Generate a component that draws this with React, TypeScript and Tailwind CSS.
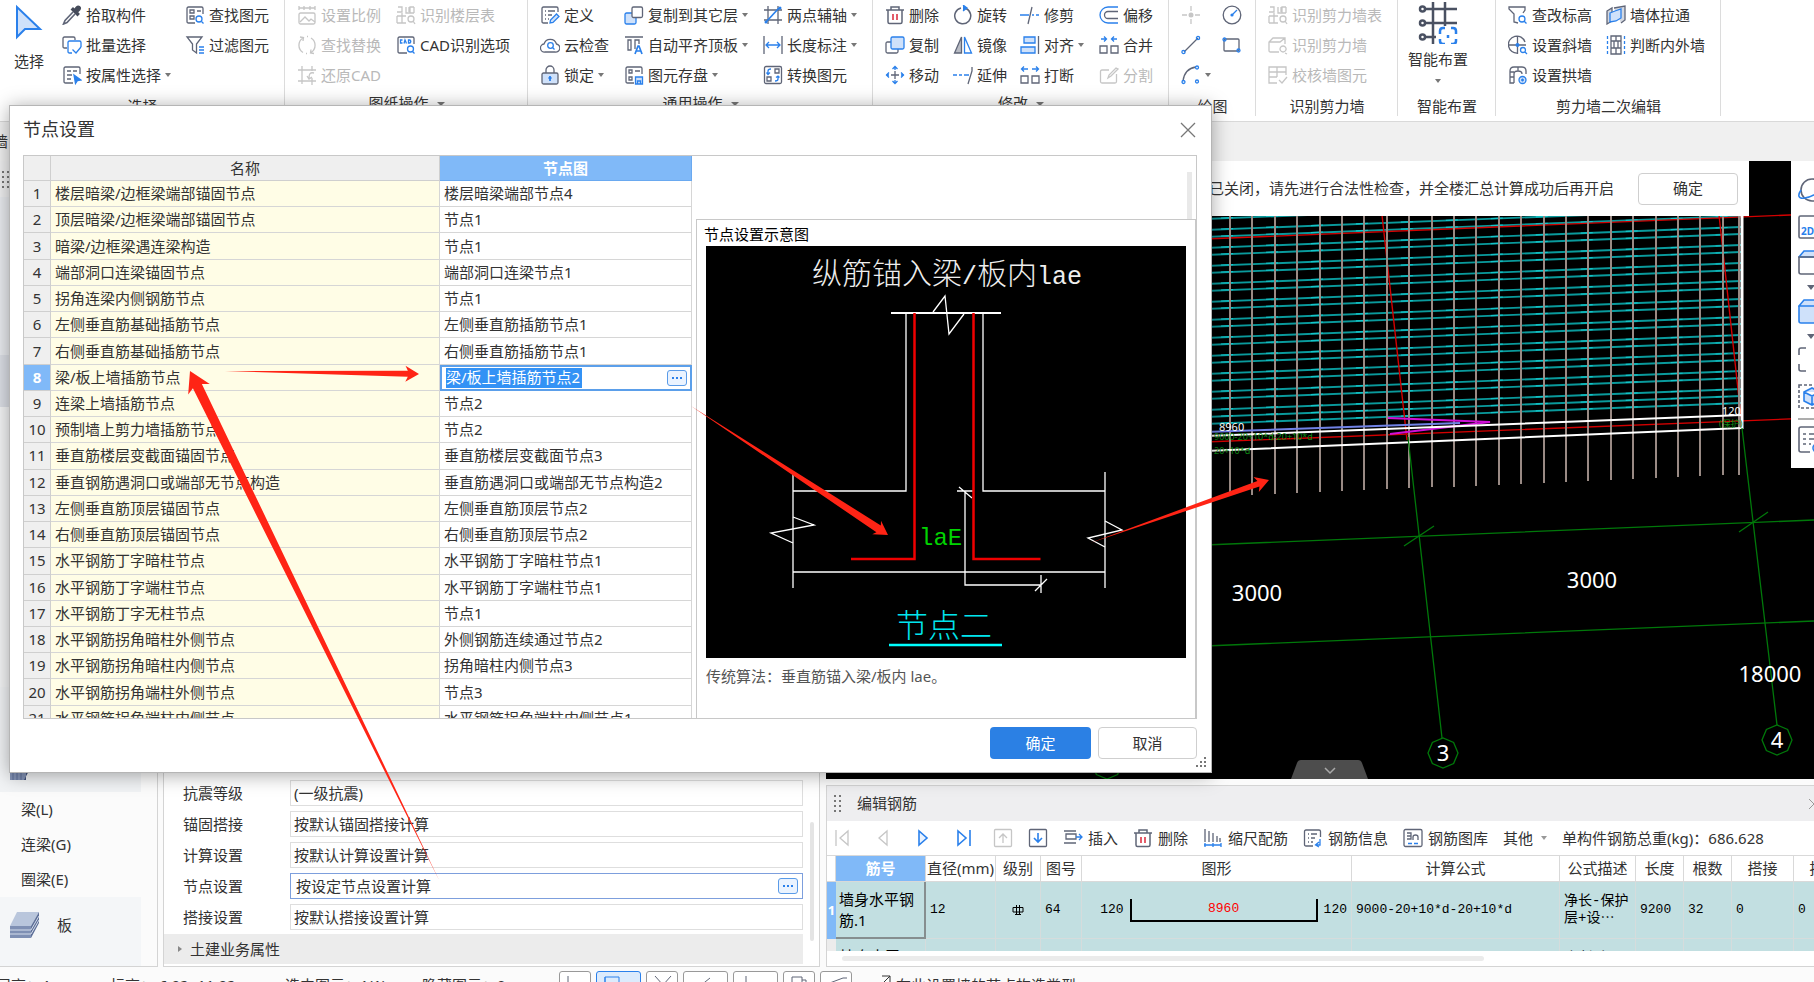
import type { ReactNode } from "react";

import { clsx } from "clsx";

const G = "#5f6577";
const B = "#2a80eb";
const L = "#cfe1fa";
const D = "#c6c6c6";

const ICONS: Record<string, ReactNode> = {
  pipette: (
    <>
      <path d="m11 7-8 8.500-1.500 3.500L5 17.500 13 9" fill="none" stroke={G} strokeWidth="1.600" />
      <path d="m9.500 4.500 6 6L17 9l-1.500-2L18 4.500Q19 2.500 17.500 1.500 16 .5 14.500 2L12.500 4.500 11 3z" fill="#454b5a" stroke="#454b5a" />
    </>
  ),
  batch: (
    <>
      <path d="M5 13H2.500Q1 13 1 11.500v-8Q1 2 2.500 2h9Q13 2 13 3.500V5" stroke={G} />
      <path d="M10 18H7.500Q6 18 6 16.500v-9Q6 6 7.500 6h10Q19 6 19 7.500V12" fill="#fff" stroke={B} />
      <path d="m10.500 14.500 3.500 3.500 5-6" stroke={B} />
    </>
  ),
  propSelect: (
    <>
      <path d="M11 18H3.500Q2 18 2 16.500v-13Q2 2 3.500 2h13Q18 2 18 3.500V9" stroke={G} />
      <path d="M5 6h4m2 0h4M5 10h5M5 14h4" stroke={G} />
      <path d="m12 10 7 5-3.500.5-2 3z" fill={B} stroke={B} />
    </>
  ),
  find: (
    <>
      <path d="M10 18H3.500Q2 18 2 16.500v-13Q2 2 3.500 2h13Q18 2 18 3.500V9" stroke={G} />
      <path d="M5 5h4v3H5zM12 6h4M5 11h4v3H5z" stroke={G} />
      <circle cx="14" cy="14" r="3" stroke={B} />
      <path d="m16.500 16.500 2 2" stroke={B} />
    </>
  ),
  filter: (
    <>
      <path d="M2 2h15l-5.500 7v9l-4-3V9z" stroke={G} />
      <path d="M14 12h5m-5 3h5m-5 3h5" stroke={B} />
    </>
  ),
  scale: (
    <>
      <path d="M2 3h16M2 1v4M18 1v4M7 1v4M13 1v4" stroke={D} />
      <rect x="2" y="8" width="16" height="11" rx="1.500" stroke={D} />
      <path d="m3 17 5-5 4 4 2-2 4 3" stroke={D} />
    </>
  ),
  replace: (
    <path d="M6 17.500A8.500 8.500 0 0 1 6 3M3 2l3.500.5L6 6M14 3a8.500 8.500 0 0 1 0 14.500M17 18.500l-3.500-.5.5-3.500M9 18.500h1M10 1.500h1" stroke={D} />
  ),
  restore: (
    <path d="M1 5h18M5 1v18M15 1v5M1 16h18M15 13v7M17 8c-4-1-5 1-5 5m-2-2 2 3 3-2" stroke={D} />
  ),
  floorTable: (
    <>
      <path d="M2 2h4v5H1M10 2v6h8M13 2v5M1 11h9M6 8v10M1 18h9M1 11v7M18 2h-4v6M18 2v6" stroke={D} />
      <circle cx="15" cy="14" r="3" stroke={D} />
      <path d="m17 16 2 3" stroke={D} />
    </>
  ),
  cad: (
    <>
      <path d="M11 18H3.500Q2 18 2 16.500v-13Q2 2 3.500 2h13Q18 2 18 3.500V9" stroke={G} />
      <path d="M6.500 5H4.500v3h2M8 8.500l1-3.500 1.500 3.500M12.500 5v3H14q1.500-1.500 0-3z" stroke={B} />
      <circle cx="14.500" cy="14" r="3" stroke={B} />
      <path d="m16.500 16.500 2 2" stroke={B} />
    </>
  ),
  define: (
    <>
      <path d="M8 18H3.500Q2 18 2 16.500v-13Q2 2 3.500 2h13Q18 2 18 3.500V7M5 6h1m2 0h7M5 10h1m2 0h4M5 14h1m2 0h1" stroke={G} />
      <path d="m10 18 .5-3 6-6 2.500 2.500-6 6z" fill={L} stroke={B} />
    </>
  ),
  cloud: (
    <>
      <path d="M5 17a4 4 0 0 1-1-8 6.500 6.500 0 0 1 12.500 0A4 4 0 0 1 15 17z" stroke={G} />
      <circle cx="10.500" cy="10.500" r="2.800" stroke={B} />
      <path d="m12.500 12.500 2 2" stroke={B} />
    </>
  ),
  lock: (
    <>
      <path d="M6 8V5a4 4 0 0 1 8 0v3" stroke={G} />
      <rect x="2" y="8" width="16" height="11" rx="1.500" fill={L} stroke={G} />
      <path d="M10 11v5m-1.500-3h3" stroke={B} strokeWidth="1.800" />
    </>
  ),
  copyFloor: (
    <>
      <rect x="1" y="8" width="11" height="11" rx="1.500" fill={L} stroke={B} />
      <rect x="8" y="2" width="10.500" height="10.500" rx="1.500" fill="#fff" stroke={G} />
    </>
  ),
  alignTop: (
    <>
      <path d="M1 2h18M4 5h3v10H4zM11 14V5h4v4" stroke={G} />
      <path d="m11 19 3-8h1l3 8m-6-3h5" stroke={B} strokeWidth="1.700" />
    </>
  ),
  save: (
    <>
      <path d="M10 18H3.500Q2 18 2 16.500v-13Q2 2 3.500 2h13Q18 2 18 3.500V9M5 5h3v3H5zm6 1h5M5 12h3v3H5z" stroke={G} />
      <path d="M11.500 12h7v7h-7zm2 7v-3h3v3" fill={L} stroke={B} />
    </>
  ),
  axis: (
    <>
      <path d="M5 1v18M15 1v18M1 5h18M1 15h18" stroke={G} />
      <path d="M3 17 16 3" stroke={B} strokeWidth="1.700" />
      <circle cx="17" cy="3" r="1.500" fill={B} />
      <circle cx="3" cy="17" r="1.500" fill={B} />
    </>
  ),
  length: (
    <>
      <path d="M1 1v18M19 1v18" stroke={G} />
      <path d="M3 10h14M6 7l-3 3 3 3m8-6 3 3-3 3" stroke={B} />
    </>
  ),
  convert: (
    <>
      <rect x="1.500" y="1.500" width="17" height="17" rx="1.500" stroke={G} />
      <path d="M12 4h4v4h-4zM4 12h4v4H4z" stroke={G} />
      <path d="M5 9V6q0-2 3-2M3.500 7.500 5 9.500l2-2M15 11v3q0 2-3 2m4.500-3.500L15 11l-2 1.500" stroke={B} />
    </>
  ),
  trash: (
    <>
      <path d="M1 5h18M6 5V2h8v3M3 5v12q0 1.500 1.500 1.500h11Q17 18.500 17 17V5" stroke={G} strokeWidth="1.500" />
      <path d="M8 9v6m4-6v6" stroke="#dc3545" strokeWidth="1.600" />
    </>
  ),
  copy: (
    <>
      <path d="M6 7H2.500Q1 7 1 8.500v8Q1 18 2.500 18h9q1.500 0 1.500-1.500V13" stroke={G} />
      <rect x="6" y="2" width="13" height="12" rx="1.500" fill={L} stroke={B} />
    </>
  ),
  move: (
    <>
      <path d="M10 6v8M6 10h8" stroke={G} />
      <path d="M7.500 4 10 1.500 12.500 4m-5 12 2.500 2.500 2.500-2.500M4 7.500 1.500 10 4 12.500m12-5 2.500 2.500-2.500 2.500M10 1v4m0 10v4M1 10h3m12 0h3" stroke={B} />
    </>
  ),
  rotate: (
    <>
      <path d="M13 3.500a8 8 0 1 1-5-.5" stroke={G} strokeWidth="1.500" />
      <path d="m10 0 4 3-4 3" fill={B} stroke={B} />
    </>
  ),
  mirror: (
    <>
      <path d="M8.500 2v16H1.500z" fill="#b9bcc4" stroke={G} />
      <path d="M11.500 2v16h7z" fill="#fff" stroke={B} />
    </>
  ),
  extend: (
    <>
      <path d="M19 2v4l-4 13" stroke={G} />
      <path d="M0 10h4m2 0h3m2 0h5" stroke={B} />
    </>
  ),
  trim: (
    <>
      <path d="m12 2-4 17" stroke={G} />
      <path d="M0 10h9m3 0h2m2 0h3" stroke={B} />
    </>
  ),
  align: (
    <>
      <path d="M18.500 1v18" stroke={G} />
      <path d="M4 2h11v6H4zM1 12h14v6H1z" fill={L} stroke={B} />
    </>
  ),
  split: (
    <>
      <path d="M1 11h7v7H1zm11 0h7v7h-7z" stroke={G} />
      <path d="M8 4H2m2-2.500L1.500 4 4 6.500M12 4h6m-2-2.500L18.500 4 16 6.500" stroke={B} />
    </>
  ),
  offset: (
    <>
      <path d="M19 6.500H9a3.500 3.500 0 0 0 0 7h10" stroke={G} />
      <path d="M19 2H9a8 8 0 0 0 0 16h10" stroke={B} />
    </>
  ),
  merge: (
    <>
      <path d="M1 11h7v7H1zm11 0h7v7h-7z" stroke={G} />
      <path d="M2 4h5M5 1.500 7.500 4 5 6.500M18 4h-5m2-2.500L12.500 4 15 6.500" stroke={B} />
    </>
  ),
  cut: <path d="M10 5H3Q1.500 5 1.500 6.500v10Q1.500 18 3 18h13q1.500 0 1.500-1.500V9M9 13l1-3 7-7 2 1-7 7z" stroke={D} />,
  point: (
    <>
      <path d="M10 1v5m0 8v5M1 10h5m8 0h5" stroke={D} />
      <circle cx="10" cy="10" r="2.500" fill={D} />
    </>
  ),
  circle: (
    <>
      <circle cx="10" cy="10" r="8.800" stroke={G} />
      <path d="m10 10 5-5" stroke={B} />
      <circle cx="10" cy="10" r="1.600" fill={B} />
    </>
  ),
  line: (
    <>
      <path d="M3 17 17 3" stroke={G} />
      <circle cx="2.500" cy="17" r="1.600" stroke={B} />
      <circle cx="17" cy="3" r="1.600" stroke={B} />
    </>
  ),
  rect: (
    <>
      <rect x="2" y="4" width="15" height="12" rx="1" stroke={G} />
      <circle cx="2.500" cy="4.500" r="1.500" stroke={B} />
      <circle cx="16.500" cy="15.500" r="1.500" stroke={B} />
    </>
  ),
  arc: (
    <>
      <path d="M2 16C3 8 8 3 15 2" stroke={G} />
      <circle cx="2.500" cy="17" r="1.500" stroke={B} />
      <circle cx="16" cy="2.500" r="1.500" stroke={B} />
      <circle cx="16" cy="16.500" r="1.500" stroke={B} />
    </>
  ),
  wallFind: (
    <path d="M11 17H2.500Q1 17 1 15.500V7l4-4h12v6M1 7h11l5-4M17 18l2 1M15 11a3 3 0 1 0 .1 0z" stroke={D} />
  ),
  wallCheck: <path d="M9 18H1V2h17v8M1 7h17M1 12h8M9 2v10m2 3 3 3 5-6" stroke={D} />,
  elevation: (
    <>
      <path d="M10 18 6 17V9L1 4V2h16v3l-2 3" stroke={G} />
      <circle cx="14" cy="14" r="3" stroke={B} />
      <path d="m16 16 2.500 2.500" stroke={B} />
    </>
  ),
  slanted: (
    <>
      <path d="M17 7A8.500 8.500 0 1 0 10 18M1 10h17M9.500 1v18" stroke={G} />
      <circle cx="9.500" cy="10" r="2" fill={B} />
      <circle cx="15" cy="15" r="2.500" stroke={B} />
      <path d="m17 17 2 2" stroke={B} />
    </>
  ),
  arch: (
    <>
      <path d="M6 18H2V6q0-4 4-4h8q4 0 4 4v3M6 18V9q0-3 4-3t4 3M2 12h4M2 7h4M10 2v4" stroke={G} />
      <circle cx="14.500" cy="15" r="3.500" fill={L} stroke={B} />
      <path d="M13 15h3m-1.500-1.500v3" stroke={B} />
    </>
  ),
  wallLink: (
    <>
      <path d="m1 6 5-3v13l-5 3zM8 3l11-2v14l-4 3" fill="#d4d8e0" stroke={G} />
      <path d="m4 8 5-2 6-2v9l-5 3-6 1z" fill={L} stroke={B} />
    </>
  ),
  wallJudge: (
    <>
      <path d="M5 1h10v18H5zM5 6h10M5 13h10M10 1v5m-2 0v7m4-7v7m-2 0v6" stroke={G} />
      <path d="M1.500 1v18M18.500 1v18" stroke={B} strokeDasharray="3 2" />
    </>
  ),
  first: <path d="M3 2v16M15 3v14L7 10z" stroke={D} />,
  prev: <path d="M14 3v14l-8-7z" stroke={D} />,
  next: <path d="M6 3v14l8-7z" fill="#eaf3ff" stroke={B} strokeWidth="1.600" />,
  last: <path d="M17 2v16M5 3v14l8-7z" stroke={B} strokeWidth="1.600" />,
  up: <path d="M2.500 1.500h15q1 0 1 1v15q0 1-1 1h-15q-1 0-1-1v-15q0-1 1-1zM10 15V6m-4 4 4-4 4 4" stroke={D} />,
  down: (
    <>
      <rect x="1.500" y="1.500" width="17" height="17" rx="1" stroke={G} />
      <path d="M10 5v9m-4-4 4 4 4-4" stroke={B} strokeWidth="1.600" />
    </>
  ),
  insert: (
    <>
      <path d="M1 3h12M1 15h12M13 6H3v5h10z" stroke={G} />
      <path d="M13 9h6m-3-3 3 3-3 3" stroke={B} />
    </>
  ),
  ruler: (
    <>
      <path d="M2 1v13m4-11v11m4-9v9m4-6v6m3-4v4" stroke={G} />
      <path d="M1 17h17M2 15v4m8-4v4m8-4v4" stroke={B} />
    </>
  ),
  info: (
    <>
      <path d="M10 18H3Q1.500 18 1.500 16.500v-13Q1.500 2 3 2h13q1.500 0 1.500 1.500V9M5 6h1m2 0h6M5 10h1m2 0h4M5 14h1m2 0h2" stroke={G} />
      <path d="M17 11v6h-4m3-3-3.500 3 3.500 2" stroke={B} />
    </>
  ),
  library: (
    <>
      <rect x="1" y="1.500" width="18" height="17" rx="1.500" stroke={G} />
      <path d="M4 5h4v6H4m0-3h4m2 4V9q0-2 2.500-2T15 9v3" stroke={G} />
      <path d="M5 15.500h4m2 0h4" stroke={B} />
    </>
  ),
};

function Icon({ name }: { name: string }) {
  return (
    <svg viewBox="0 0 20 20" className="size-5 shrink-0" fill="none" strokeWidth="1.300" aria-hidden="true">
      {ICONS[name]}
    </svg>
  );
}

function Caret() {
  return <span className="ml-1 border-x-[3px] border-t-4 border-x-transparent border-t-[#777]" aria-hidden="true" />;
}

type Tool = { icon: string; label: string; text?: string; off?: boolean; menu?: boolean };

function ToolColumn({ tools, className }: { tools: Tool[]; className?: string }) {
  return (
    <div className={clsx("flex shrink-0 flex-col items-start", className)}>
      {tools.map((tool) => (
        <button
          key={tool.label}
          type="button"
          aria-label={tool.label}
          disabled={tool.off}
          className="flex h-[30px] items-center whitespace-nowrap text-[15px] disabled:text-[#b9b9b9]"
        >
          <Icon name={tool.icon} />
          {tool.text === "" ? null : <span className="ml-1">{tool.label}</span>}
          {tool.menu ? <Caret /> : null}
        </button>
      ))}
    </div>
  );
}

function Group({
  title,
  menu,
  className,
  children,
}: {
  title: string;
  menu?: boolean;
  className?: string;
  children: ReactNode;
}) {
  return (
    <section className={clsx("relative flex shrink-0 flex-col", className)} aria-label={title}>
      <div className="flex h-[90px] pl-3">{children}</div>
      <div className={clsx("flex h-[31px] items-center justify-center text-[15px]", menu ? "pb-1" : "pt-[2px]")}>
        {title}
        {menu ? <span className="ml-2 border-x-4 border-t-4 border-x-transparent border-t-[#777]" /> : null}
      </div>
      <span className="absolute right-0 top-0 h-[116px] w-px bg-[#dcdcdc]" />
    </section>
  );
}

function Ribbon() {
  return (
    <header className="flex shrink-0 overflow-hidden border-b border-[#d9d9d9] bg-white">
      <Group title="选择" className="w-[285px]">
        <button type="button" className="flex w-[34px] shrink-0 flex-col items-center pt-1 text-[15px]">
          <svg viewBox="0 0 34 38" className="h-[38px] w-[34px] shrink-0" aria-hidden="true">
            <path d="M5 3v30l8-8h15z" fill={L} stroke={B} strokeWidth="2" />
          </svg>
          <span className="mt-2 whitespace-nowrap">选择</span>
        </button>
        <ToolColumn
          className="ml-4 w-[123px]"
          tools={[
            { icon: "pipette", label: "拾取构件" },
            { icon: "batch", label: "批量选择" },
            { icon: "propSelect", label: "按属性选择", menu: true },
          ]}
        />
        <ToolColumn
          tools={[
            { icon: "find", label: "查找图元" },
            { icon: "filter", label: "过滤图元" },
          ]}
        />
      </Group>
      <Group title="图纸操作" menu className="w-[243px]">
        <ToolColumn
          className="w-[99px]"
          tools={[
            { icon: "scale", label: "设置比例", off: true },
            { icon: "replace", label: "查找替换", off: true },
            { icon: "restore", label: "还原CAD", off: true },
          ]}
        />
        <ToolColumn
          tools={[
            { icon: "floorTable", label: "识别楼层表", off: true },
            { icon: "cad", label: "CAD识别选项" },
          ]}
        />
      </Group>
      <Group title="通用操作" menu className="w-[345px]">
        <ToolColumn
          className="w-[84px]"
          tools={[
            { icon: "define", label: "定义" },
            { icon: "cloud", label: "云检查" },
            { icon: "lock", label: "锁定", menu: true },
          ]}
        />
        <ToolColumn
          className="w-[139px]"
          tools={[
            { icon: "copyFloor", label: "复制到其它层", menu: true },
            { icon: "alignTop", label: "自动平齐顶板", menu: true },
            { icon: "save", label: "图元存盘", menu: true },
          ]}
        />
        <ToolColumn
          tools={[
            { icon: "axis", label: "两点辅轴", menu: true },
            { icon: "length", label: "长度标注", menu: true },
            { icon: "convert", label: "转换图元" },
          ]}
        />
      </Group>
      <Group title="修改" menu className="w-[296px]">
        <ToolColumn
          className="w-[68px]"
          tools={[
            { icon: "trash", label: "删除" },
            { icon: "copy", label: "复制" },
            { icon: "move", label: "移动" },
          ]}
        />
        <ToolColumn
          className="w-[67px]"
          tools={[
            { icon: "rotate", label: "旋转" },
            { icon: "mirror", label: "镜像" },
            { icon: "extend", label: "延伸" },
          ]}
        />
        <ToolColumn
          className="w-[79px]"
          tools={[
            { icon: "trim", label: "修剪" },
            { icon: "align", label: "对齐", menu: true },
            { icon: "split", label: "打断" },
          ]}
        />
        <ToolColumn
          tools={[
            { icon: "offset", label: "偏移" },
            { icon: "merge", label: "合并" },
            { icon: "cut", label: "分割", off: true },
          ]}
        />
      </Group>
      <Group title="绘图" className="w-[87px]">
        <ToolColumn
          className="w-[41px]"
          tools={[
            { icon: "point", label: "点", text: "", off: true },
            { icon: "line", label: "直线", text: "" },
            { icon: "arc", label: "弧线", text: "", menu: true },
          ]}
        />
        <ToolColumn
          tools={[
            { icon: "circle", label: "圆", text: "" },
            { icon: "rect", label: "矩形", text: "" },
          ]}
        />
      </Group>
      <Group title="识别剪力墙" className="w-[142px]">
        <ToolColumn
          tools={[
            { icon: "floorTable", label: "识别剪力墙表", off: true },
            { icon: "wallFind", label: "识别剪力墙", off: true },
            { icon: "wallCheck", label: "校核墙图元", off: true },
          ]}
        />
      </Group>
      <Group title="智能布置" className="w-[98px]">
        <button type="button" className="flex w-14 flex-col items-center pt-[2px] text-[15px]">
          <svg viewBox="0 0 40 42" className="h-[42px] w-10 shrink-0" fill="none" strokeWidth="2.500" aria-hidden="true">
            <path d="M7 7h32M7 21h32M7 35h11M15 0v42M27 0v24" stroke="#4a5162" />
            <circle cx="4.500" cy="7" r="2.500" stroke="#4a5162" />
            <circle cx="4.500" cy="21" r="2.500" stroke="#4a5162" />
            <circle cx="4.500" cy="35" r="2.500" stroke="#4a5162" />
            <path d="M22 32v-3q0-3 3-3h2m6 0h2q3 0 3 3v3m0 5v2q0 3-3 3h-2m-6 0h-2q-3 0-3-3v-2M30 33v3" stroke={B} />
          </svg>
          <span className="mt-1 whitespace-nowrap">智能布置</span>
          <span className="mt-2 border-x-[3px] border-t-4 border-x-transparent border-t-[#777]" />
        </button>
      </Group>
      <Group title="剪力墙二次编辑" className="w-[225px]">
        <ToolColumn
          className="w-[98px]"
          tools={[
            { icon: "elevation", label: "查改标高" },
            { icon: "slanted", label: "设置斜墙" },
            { icon: "arch", label: "设置拱墙" },
          ]}
        />
        <ToolColumn
          tools={[
            { icon: "wallLink", label: "墙体拉通" },
            { icon: "wallJudge", label: "判断内外墙" },
          ]}
        />
      </Group>
    </header>
  );
}

function Grip({ className }: { className?: string }) {
  return (
    <span className={clsx("grid grid-cols-2 gap-x-[3px] gap-y-[3px]", className)} aria-hidden="true">
      {Array.from({ length: 8 }, (_, i) => (
        <span key={i} className="size-[2px] bg-[#777]" />
      ))}
    </span>
  );
}

function SlabIcon() {
  return (
    <svg viewBox="0 0 32 28" className="h-7 w-8 shrink-0" aria-hidden="true">
      <path d="M8 1h22l-8 14H1z" fill="#b9c6dc" />
      <path d="M1 15h21v12H1z" fill="#7f90b4" />
      <path d="M30 1v11l-8 15V15z" fill="#5d6f98" />
      <path d="M1 19h21l8-14M1 23h21l8-14" stroke="#d6deec" fill="none" />
    </svg>
  );
}

function BeamIcon() {
  return (
    <svg viewBox="0 0 32 28" className="h-7 w-8 shrink-0" aria-hidden="true">
      <path d="M1 6h16v22H1z" fill="#8393b6" />
      <path d="M17 6h10L15 28h2z" fill="#3f5079" />
      <path d="M4 6v22M8 6v22M12 6v22" stroke="#5d6f98" />
      <path d="M1 6 11 1h20l-4 5z" fill="#b9c6dc" />
    </svg>
  );
}

function ComponentNav() {
  return (
    <nav className="flex w-[158px] shrink-0 flex-col border-b border-r border-[#d4d4d4] bg-[#fbfbfb]" aria-label="构件">
      <div className="flex h-9 shrink-0 items-center bg-[#efeff0] pl-[2px]">
        <Grip />
      </div>
      <div className="h-[158px] shrink-0 bg-[#e9ebef]" />
      <div className="h-[52px] shrink-0 bg-[#dcdfe6]" />
      <div className="flex-1 bg-[#f4f5f6]" />
      <div className="mr-4 flex h-[105px] shrink-0 items-end bg-[#f1f3f5] pb-3 pl-[9px]">
        <BeamIcon />
      </div>
      {["梁(L)", "连梁(G)", "圈梁(E)"].map((label) => (
        <a key={label} href="#" className="flex h-[35px] shrink-0 items-center pl-[21px] text-[15px]">
          {label}
        </a>
      ))}
      <div className="mr-4 flex h-[69px] shrink-0 items-start gap-4 bg-[#f4f6f8] pl-[9px] pt-[14px] text-[15px]">
        <SlabIcon />
        <span className="leading-7">板</span>
      </div>
    </nav>
  );
}

const PROPERTIES = [
  { id: "seismic", label: "抗震等级", value: "(一级抗震)" },
  { id: "anchor", label: "锚固搭接", value: "按默认锚固搭接计算" },
  { id: "calc", label: "计算设置", value: "按默认计算设置计算" },
  { id: "node", label: "节点设置", value: "按设定节点设置计算", active: true },
  { id: "lap", label: "搭接设置", value: "按默认搭接设置计算" },
];

function MoreButton({ label }: { label: string }) {
  return (
    <button
      type="button"
      aria-label={label}
      className="flex h-4 w-5 shrink-0 items-center justify-center gap-[2px] rounded-[3px] border border-[#5a9be8] bg-[#eaf3ff]"
    >
      <span className="size-[2px] bg-[#2a80eb]" />
      <span className="size-[2px] bg-[#2a80eb]" />
      <span className="size-[2px] bg-[#2a80eb]" />
    </button>
  );
}

function PropertyPanel() {
  return (
    <section
      className="ml-[5px] flex w-[657px] shrink-0 flex-col justify-end border border-[#d4d4d4] bg-white pb-[2px]"
      aria-label="属性"
    >
      <div className="flex">
        <div className="flex flex-1 flex-col gap-[5px]">
          {PROPERTIES.map((property) => (
            <div key={property.id} className="flex h-[26px] items-center pl-[19px]">
              <label htmlFor={property.id} className="w-[107px] text-[15px]">
                {property.label}
              </label>
              <div
                className={clsx(
                  "flex h-[26px] flex-1 items-center border pr-1",
                  property.active ? "border-[#7d9fdd] pl-[5px]" : "border-[#dedede] pl-[3px]",
                )}
              >
                <input id={property.id} defaultValue={property.value} className="min-w-0 flex-1 text-[15px] outline-none" />
                {property.active ? <MoreButton label="编辑节点设置" /> : null}
              </div>
            </div>
          ))}
          <button type="button" className="-mt-px flex h-[30px] items-center bg-[#ececec] pl-[14px] text-[15px]">
            <span className="mr-2 border-y-[3px] border-l-4 border-y-transparent border-l-[#888]" />
            土建业务属性
          </button>
        </div>
        <div className="w-4 shrink-0 pl-[7px] pt-[42px]">
          <div className="h-[119px] w-1 rounded bg-[#e4e4e4]" />
        </div>
      </div>
    </section>
  );
}

// Lower ends of the vertical bars follow the slope of the wall base.
const BARS = Array.from({ length: 23 }, (_, i) => 1230 + Math.round(i * 22.4)).concat(1739);
const STIRRUPS = Array.from({ length: 24 }, (_, i) => 201 + Math.floor(i / 2) * 18 + (i % 2) * 11).concat(417, 424);

function octagon(cx: number, cy: number) {
  return Array.from({ length: 8 }, (_, i) => {
    const angle = (i * Math.PI) / 4;
    return `${cx + 15 * Math.cos(angle)},${cy + 15 * Math.sin(angle)}`;
  }).join(" ");
}

function ModelView() {
  return (
    <svg
      viewBox="826 161 988 618"
      preserveAspectRatio="xMaxYMin slice"
      className="absolute inset-0 size-full"
      role="img"
      aria-label="剪力墙钢筋三维"
      fill="none"
    >
      {STIRRUPS.map((y) => (
        <g key={y}>
          <path d={`M1205 ${y}L1741 ${y - 21}`} stroke="#0a9a9c" strokeWidth="1.900" />
          <path d={`M1221 ${y - 1}L1741 ${y - 21}`} stroke="#14c4c8" strokeWidth="1.200" strokeDasharray="12 33" />
        </g>
      ))}
      <path d="M1205 239 1814 214M1205 442 1814 418M1382 215l25 225M1719 215l22 202" stroke="#d40000" strokeWidth="1.400" />
      {BARS.map((x) => (
        <path key={x} d={`M${x} 200V${Math.round(495 - (x - 1253) * 0.042)}`} stroke="#998a84" strokeWidth="2" />
      ))}
      <path d="M1205 432 1460 423" stroke="#7082e6" strokeWidth="2" />
      <path d="m1388 418 102 4-100 12" stroke="#d010d8" strokeWidth="2" />
      <path d="M1205 436 1742 415M1205 451l537-23" stroke="#fff" strokeWidth="2" />
      <path d="M1742 200v229" stroke="#fff" strokeWidth="3" />
      <g stroke="#00780a" strokeWidth="1.300">
        <path d="m1408 437 34 301M1742 428l35 297" />
        <path d="M1205 545 1814 520M1205 646l609-25" />
        <path d="m1404 546 30-20M1739 532l29-20" />
        <polygon points={octagon(1443, 753)} />
        <polygon points={octagon(1777, 740)} />
        <polygon points={octagon(1107, 764)} />
      </g>
      <g fill="#fff" fontSize="22" textAnchor="middle">
        <text x="1257" y="601">3000</text>
        <text x="1592" y="588">3000</text>
        <text x="1770" y="682">18000</text>
        <text x="1443" y="761">3</text>
        <text x="1777" y="748">4</text>
      </g>
      <g fontSize="11" fill="#fff">
        <text x="1219" y="431">8960</text>
        <text x="1722" y="415">120</text>
      </g>
      <g fontSize="9" fill="#0c8a14">
        <text x="1214" y="440">9000-20+10*d-20+10*d</text>
        <text x="1214" y="454">20+10*d</text>
        <text x="1719" y="427">(保护)</text>
      </g>
      <path d="m1291 779 6-16q1-3 4-3h57q3 0 4 3l6 16z" fill="#4d4d4d" />
      <path d="m1325 768 5 5 5-5" stroke="#aaa" strokeWidth="1.500" />
    </svg>
  );
}

function ViewTools() {
  return (
    <aside className="absolute right-0 top-0 w-[23px] overflow-hidden bg-white pb-3 pl-[7px] pt-[17px]" aria-label="视图">
      <svg viewBox="0 0 28 278" className="h-[278px] w-7 max-w-none" fill="none" strokeWidth="1.600" aria-hidden="true">
        <circle cx="14" cy="12" r="11" stroke={G} />
        <path d="M3 12c-8 12 8 10 20 0" stroke={B} />
        <rect x="1" y="38" width="26" height="22" rx="1.500" stroke={G} />
        <text x="3" y="57" fill={B} fontSize="10" fontWeight="700">2D</text>
        <path d="m1 79 5-6h21v6z" fill={L} stroke={B} />
        <path d="M1 79v15q0 2 2 2h24V79z" stroke={G} />
        <path d="M9 107h8l-4 5zM9 156h8l-4 5z" fill={G} />
        <path d="m1 128 5-6h21v6zM1 128v15q0 2 2 2h24v-17z" fill={L} stroke={B} />
        <path d="M8 170H3q-2 0-2 2v5m0 9v5q0 2 2 2h5m11-23h5v7m0 9v7h-5" stroke={G} />
        <path d="M1 207h26v23H1z" stroke={G} strokeDasharray="3 2" />
        <path d="m6 214 8-4 8 4v9l-8 4-8-4zm0 0 8 4 8-4m-8 4v9" fill={L} stroke={B} />
        <path d="M0 241h28" stroke="#999" />
        <path d="M12 274H3q-2 0-2-2v-21q0-2 2-2h24M5 256h3m3 0h10M5 261h3m3 0h10M5 266h3m3 0h2" stroke={G} />
        <circle cx="19" cy="270" r="4" stroke={B} />
      </svg>
    </aside>
  );
}

function Canvas() {
  return (
    <div className="relative min-h-0 flex-1 overflow-hidden bg-black">
      <ModelView />
      <div className="absolute left-0 right-[65px] top-0 flex h-[55px] items-center justify-end gap-6 bg-white pr-[11px] text-[15px]">
        <p>已关闭，请先进行合法性检查，并全楼汇总计算成功后再开启</p>
        <button type="button" className="h-8 w-[100px] rounded-[4px] border border-[#cfcfcf]">
          确定
        </button>
      </div>
      <ViewTools />
    </div>
  );
}

const REBAR_HEADERS = [
  { label: "直径(mm)", width: "w-[70px]" },
  { label: "级别", width: "w-[45px]" },
  { label: "图号", width: "w-[41px]" },
  { label: "图形", width: "w-[270px]" },
  { label: "计算公式", width: "w-[208px]" },
  { label: "公式描述", width: "w-[76px]" },
  { label: "长度", width: "w-[48px]" },
  { label: "根数", width: "w-[48px]" },
  { label: "搭接", width: "w-[62px]" },
  { label: "损耗", width: "w-[62px]" },
];

const CELL = "border-b border-r border-[#d5dcdc] font-['Liberation_Mono','Noto_Sans_CJK_SC',monospace]";
const NUMBER_CELL = `${CELL} px-1 text-[13px]`;

function RebarTable() {
  return (
    <table className="w-[1029px] table-fixed border-separate border-spacing-0 bg-[#c2dfe1] text-black">
      <thead className="bg-white text-[#333]">
        <tr className="h-[26px] whitespace-nowrap text-[15px]">
          <th className="w-[9px] border-b border-r border-[#d9d9d9]" aria-label="序号" />
          <th className="w-[90px] border-b border-r border-[#d9d9d9] bg-[#80b9f8] font-bold text-white">筋号</th>
          {REBAR_HEADERS.map((header) => (
            <th key={header.label} className={clsx("border-b border-r border-[#d9d9d9] font-normal", header.width)}>
              {header.label}
            </th>
          ))}
        </tr>
      </thead>
      <tbody>
        <tr className="h-[57px]">
          <th className="bg-[#80b9f8] text-[13px] font-bold text-white">1</th>
          <td className="border-b-2 border-r-2 border-[#868e8f] px-[3px] text-[15px] leading-[21px]">墙身水平钢筋.1</td>
          <td className={NUMBER_CELL}>12</td>
          <td className={NUMBER_CELL}>
            <svg viewBox="0 0 12 12" className="mx-auto size-3" fill="none" stroke="#000" aria-label="三级钢">
              <path d="M1 3.500h10v4.500H1zM4.500 1v10M7.500 1v10M3 10.500h6" />
            </svg>
          </td>
          <td className={NUMBER_CELL}>64</td>
          <td className={NUMBER_CELL}>
            <div className="flex items-center justify-end gap-[6px]">
              <span>120</span>
              <span className="flex h-[23px] w-[188px] items-center justify-center border-x-2 border-b-2 border-black text-[#f00]">
                8960
              </span>
              <span>120</span>
            </div>
          </td>
          <td className={NUMBER_CELL}>9000-20+10*d-20+10*d</td>
          <td className={clsx(CELL, "whitespace-nowrap px-1 text-[14px] leading-[17px]")}>
            净长-保护
            <br />
            层+设⋯
          </td>
          <td className={NUMBER_CELL}>9200</td>
          <td className={NUMBER_CELL}>32</td>
          <td className={NUMBER_CELL}>0</td>
          <td className={NUMBER_CELL}>0</td>
        </tr>
        <tr className="h-[57px] whitespace-nowrap align-top text-[15px]">
          <th className="bg-[#ececec]" aria-label="2" />
          <td className="border-r border-[#d5dcdc] px-1 pt-[7px] leading-[21px]">墙身水平</td>
          {REBAR_HEADERS.map((header) => (
            <td key={header.label} className="border-r border-[#d5dcdc] px-1 pt-[7px]">
              {header.label === "公式描述" ? "净长-保" : ""}
            </td>
          ))}
        </tr>
      </tbody>
    </table>
  );
}

const REBAR_NAV = [
  { icon: "first", label: "首条", off: true },
  { icon: "prev", label: "上一条", off: true },
  { icon: "next", label: "下一条" },
  { icon: "last", label: "末条" },
  { icon: "up", label: "上移", off: true },
];

const REBAR_TOOLS = [
  { icon: "insert", label: "插入" },
  { icon: "trash", label: "删除" },
  { icon: "ruler", label: "缩尺配筋" },
  { icon: "info", label: "钢筋信息" },
  { icon: "library", label: "钢筋图库" },
];

function RebarPanel() {
  return (
    <section className="mt-[6px] shrink-0 overflow-hidden border-y border-l border-[#d4d4d4] bg-white" aria-label="编辑钢筋">
      <div className="flex h-[35px] items-center bg-[#eeeef0] pl-[7px] text-[15px]">
        <Grip />
        <h2 className="ml-4">编辑钢筋</h2>
        <button type="button" aria-label="关闭面板" className="-mr-[6px] ml-auto">
          <svg viewBox="0 0 12 12" className="size-3" stroke="#999" aria-hidden="true">
            <path d="m1 1 10 10M11 1 1 11" />
          </svg>
        </button>
      </div>
      <div className="flex h-[35px] items-center gap-[15px] whitespace-nowrap border-b border-[#d9d9d9] pl-[6px] text-[15px]">
        <div className="flex gap-5">
          {REBAR_NAV.map((item) => (
            <button key={item.label} type="button" aria-label={item.label} disabled={item.off}>
              <Icon name={item.icon} />
            </button>
          ))}
        </div>
        <button type="button" aria-label="下移">
          <Icon name="down" />
        </button>
        {REBAR_TOOLS.map((item) => (
          <button key={item.label} type="button" className="flex items-center gap-[5px]">
            <Icon name={item.icon} />
            {item.label}
          </button>
        ))}
        <button type="button" className="flex items-center">
          其他
          <span className="ml-2 border-x-[3px] border-t-4 border-x-transparent border-t-[#999]" />
        </button>
        <span>单构件钢筋总重(kg)：686.628</span>
      </div>
      <div className="h-[95px] overflow-hidden">
        <RebarTable />
      </div>
      <div className="flex h-[15px] items-center pl-[15px]">
        <div className="h-[5px] w-[66%] rounded bg-[#ebebeb]" />
      </div>
    </section>
  );
}

const STATUS_BUTTONS = [
  { label: "正交", width: "w-8", path: "M8 4v12h14" },
  { label: "捕捉", width: "w-[45px]", path: "M8 5h14v6H8zM8 5v12M22 11h8", active: true },
  { label: "交点", width: "w-8", path: "m8 4 8 9 8-9" },
  { label: "垂点", width: "w-[45px]", path: "m16 14 10-8" },
  { label: "中点", width: "w-[45px]", path: "M12 4v12h16" },
  { label: "顶点", width: "w-8", path: "M8 5h10v10H8zM18 8h4v8" },
  { label: "坐标", width: "w-8", path: "m6 12 16-6h4" },
];

function StatusBar() {
  return (
    <footer className="h-[15px] shrink-0 overflow-hidden bg-[#fbfbfb] text-[15px]">
      <div className="flex h-9 items-center whitespace-nowrap">
        <span className="-ml-1 w-[114px]">层高：4</span>
        <span className="w-[175px]">标高：&nbsp;6.92~11.02</span>
        <span className="w-[137px]">选中图元：1(1)</span>
        <span className="w-[137px]">隐藏图元：0</span>
        <div className="flex gap-[5px] self-start pt-1">
          {STATUS_BUTTONS.map((item) => (
            <button
              key={item.label}
              type="button"
              aria-label={item.label}
              className={clsx(
                "h-7 rounded-[3px] border",
                item.width,
                item.active ? "border-[#2a80eb] bg-[#dcebfc]" : "border-[#999] bg-white",
              )}
            >
              <svg className="size-full" fill="none" stroke={item.active ? B : G} aria-hidden="true">
                <path d={item.path} />
              </svg>
            </button>
          ))}
        </div>
        <svg viewBox="0 0 12 18" className="ml-7 mr-1 h-[18px] w-3 self-start" fill="none" stroke="#333" aria-hidden="true">
          <path d="M2 9h8v8M10 9 1 18" />
        </svg>
        <span>在此设置墙的节点构造类型</span>
      </div>
    </footer>
  );
}

const NODES = [
  ["楼层暗梁/边框梁端部锚固节点", "楼层暗梁端部节点4"],
  ["顶层暗梁/边框梁端部锚固节点", "节点1"],
  ["暗梁/边框梁遇连梁构造", "节点1"],
  ["端部洞口连梁锚固节点", "端部洞口连梁节点1"],
  ["拐角连梁内侧钢筋节点", "节点1"],
  ["左侧垂直筋基础插筋节点", "左侧垂直筋插筋节点1"],
  ["右侧垂直筋基础插筋节点", "右侧垂直筋插筋节点1"],
  ["梁/板上墙插筋节点", "梁/板上墙插筋节点2"],
  ["连梁上墙插筋节点", "节点2"],
  ["预制墙上剪力墙插筋节点", "节点2"],
  ["垂直筋楼层变截面锚固节点", "垂直筋楼层变截面节点3"],
  ["垂直钢筋遇洞口或端部无节点构造", "垂直筋遇洞口或端部无节点构造2"],
  ["左侧垂直筋顶层锚固节点", "左侧垂直筋顶层节点2"],
  ["右侧垂直筋顶层锚固节点", "右侧垂直筋顶层节点2"],
  ["水平钢筋丁字暗柱节点", "水平钢筋丁字暗柱节点1"],
  ["水平钢筋丁字端柱节点", "水平钢筋丁字端柱节点1"],
  ["水平钢筋丁字无柱节点", "节点1"],
  ["水平钢筋拐角暗柱外侧节点", "外侧钢筋连续通过节点2"],
  ["水平钢筋拐角暗柱内侧节点", "拐角暗柱内侧节点3"],
  ["水平钢筋拐角端柱外侧节点", "节点3"],
  ["水平钢筋拐角端柱内侧节点", "水平钢筋拐角端柱内侧节点1"],
] as const;

const ACTIVE_NODE = 7;

function NodeTable() {
  return (
    <table className="h-[576px] w-[668px] shrink-0 table-fixed border-separate border-spacing-0 whitespace-nowrap text-[15px] leading-[23px]">
      <thead>
        <tr className="h-[25px]">
          <th className="w-[27px] border-b border-r border-[#cfcfcf] bg-[#efefef]" aria-label="序号" />
          <th className="w-[389px] border-b border-r border-[#cfcfcf] bg-[#efefef] font-normal">名称</th>
          <th className="border-b border-r border-[#6aa9f0] bg-[#80b9f8] font-bold text-white">节点图</th>
        </tr>
      </thead>
      <tbody>
        {NODES.map(([name, node], index) => {
          const active = index === ACTIVE_NODE;
          return (
            <tr key={name}>
              <th
                className={clsx(
                  "border-b border-r border-[#cfcfcf]",
                  active ? "bg-[#80b9f8] font-bold text-white" : "bg-[#efefef] font-normal",
                )}
              >
                {index + 1}
              </th>
              <td className="border-b border-r border-[#d6d6d6] bg-[#fffde6] pl-1">{name}</td>
              {active ? (
                <td className="border-2 border-[#5b9fea]">
                  <div className="flex h-5 items-center justify-between pl-1 pr-[3px]">
                    <input aria-label={name} defaultValue={node} className="h-5 w-[136px] bg-[#3392f5] text-white outline-none" />
                    <MoreButton label="选择节点图" />
                  </div>
                </td>
              ) : (
                <td className="border-b border-r border-[#d6d6d6] pl-1">{node}</td>
              )}
            </tr>
          );
        })}
      </tbody>
    </table>
  );
}

function NodeDiagram() {
  return (
    <svg viewBox="706 247 480 412" className="h-[412px] w-[480px] bg-black" fill="none" role="img" aria-label="节点二">
      <text x="812" y="285" fontSize="30" fill="#eee" fontWeight="300">
        纵筋锚入梁
        <tspan fontFamily="Liberation Mono" fontSize="25">/</tspan>
        板内
        <tspan fontFamily="Liberation Mono" fontSize="25">lae</tspan>
      </text>
      <g stroke="#fff" strokeWidth="1.300">
        <path d="M891 314h110" strokeWidth="2" />
        <path d="m933 313 12-16 4 38 15-20" />
        <path d="M906 314v178H793M983 314v178h122" />
        <path d="M793 473v116M1105 473v116M793 573h312" />
        <path d="m793 518 21 8-43 8 22 10M1105 522l17 9-34 8 17 9" />
        <path d="M965 492v94h76M957 492h16M959 488l13 11M1041 576v18M1035 592l12-12" />
      </g>
      <path d="M914.500 314v246H851M973.500 314v246h67" stroke="#f00000" strokeWidth="2.500" />
      <text x="919" y="546" fontSize="24" fill="#00d400" fontFamily="Liberation Mono">laE</text>
      <text x="896" y="638" fontSize="32" fill="#00e5ee" fontWeight="300">节点二</text>
      <path d="M889 646h113" stroke="#00ffff" strokeWidth="2.500" />
    </svg>
  );
}

function NodeDialog() {
  return (
    <div
      role="dialog"
      aria-labelledby="node-dialog-title"
      className="absolute left-[9px] top-[105px] w-[1203px] border border-[#b5b5b5] bg-white pl-[13px] pr-[14px] shadow-[0_2px_18px_rgba(0,0,0,0.35)]"
    >
      <div className="flex h-[49px] items-center justify-between pb-[2px] pr-[1px]">
        <h1 id="node-dialog-title" className="text-[18px]">
          节点设置
        </h1>
        <button type="button" aria-label="关闭">
          <svg viewBox="0 0 16 16" className="size-4" stroke="#777" strokeWidth="1.300" aria-hidden="true">
            <path d="m1 1 14 14M15 1 1 15" />
          </svg>
        </button>
      </div>
      <div className="flex h-[564px] overflow-hidden border border-[#c8c8c8]">
        <NodeTable />
        <div className="ml-1 flex flex-1 flex-col">
          <div className="flex h-[63px] shrink-0 justify-end pr-1 pt-4">
            <div className="w-[5px] bg-[#e9e9e9]" />
          </div>
          <div className="flex-1 border-l border-r border-t border-[#c8c8c8] px-[7px] pt-[2px] text-[15px]">
            <h2 className="leading-6 text-black">节点设置示意图</h2>
            <div className="pl-[2px]">
              <NodeDiagram />
              <p className="pt-[6px] leading-6 text-[#555]">传统算法：垂直筋锚入梁/板内 lae。</p>
            </div>
          </div>
        </div>
      </div>
      <div className="flex justify-end gap-[7px] pb-[13px] pt-2 text-[15px]">
        <button type="button" className="h-8 w-[101px] rounded-[4px] bg-[#2b80e4] text-white">
          确定
        </button>
        <button type="button" className="h-8 w-[99px] rounded-[4px] border border-[#cfcfcf]">
          取消
        </button>
      </div>
      <svg viewBox="0 0 12 12" className="absolute bottom-1 right-1 size-3" fill="#777" aria-hidden="true">
        <path d="M9 1h2v2H9zM9 5h2v2H9zM9 9h2v2H9zM5 5h2v2H5zM5 9h2v2H5zM1 9h2v2H1z" />
      </svg>
    </div>
  );
}

type Point = [number, number];

const ARROWS: { tail: Point; tip: Point; shaft: number; head: number }[] = [
  { tail: [225, 371], tip: [419, 374], shaft: 3, head: 8 },
  { tail: [439, 880], tip: [190, 371], shaft: 5, head: 12 },
  { tail: [691, 406], tip: [888, 535], shaft: 4, head: 8 },
  { tail: [1090, 543], tip: [1269, 480], shaft: 3, head: 8 },
];

function arrowPoints({ tail, tip, shaft, head }: (typeof ARROWS)[number]) {
  const length = Math.hypot(tip[0] - tail[0], tip[1] - tail[1]);
  const ux = (tip[0] - tail[0]) / length;
  const uy = (tip[1] - tail[1]) / length;
  const at = (back: number, side: number) =>
    `${tip[0] - ux * back - uy * side},${tip[1] - uy * back + ux * side}`;
  const neck = head * 1.4;
  const barb = head * 1.7;
  return [tail.join(","), at(neck, shaft), at(barb, head), tip.join(","), at(barb, -head), at(neck, -shaft)].join(" ");
}

function Annotations() {
  return (
    <svg className="pointer-events-none absolute inset-0 size-full" fill="#ff2415" aria-hidden="true">
      {ARROWS.map((arrow) => (
        <polygon key={arrow.tip.join()} points={arrowPoints(arrow)} />
      ))}
    </svg>
  );
}

export default function App() {
  return (
    <div className="relative flex h-screen flex-col overflow-hidden bg-[#fbfbfb] font-['Noto_Sans','Noto_Sans_CJK_SC',sans-serif] text-[#333]">
      <Ribbon />
      <div className="flex h-[39px] shrink-0 items-center overflow-hidden bg-[#f0f0f0] text-[15px]">
        <span className="-ml-[7px]">墙</span>
      </div>
      <main className="flex min-h-0 flex-1">
        <ComponentNav />
        <PropertyPanel />
        <div className="ml-[6px] flex min-w-0 flex-1 flex-col">
          <Canvas />
          <RebarPanel />
        </div>
      </main>
      <StatusBar />
      <NodeDialog />
      <Annotations />
    </div>
  );
}
